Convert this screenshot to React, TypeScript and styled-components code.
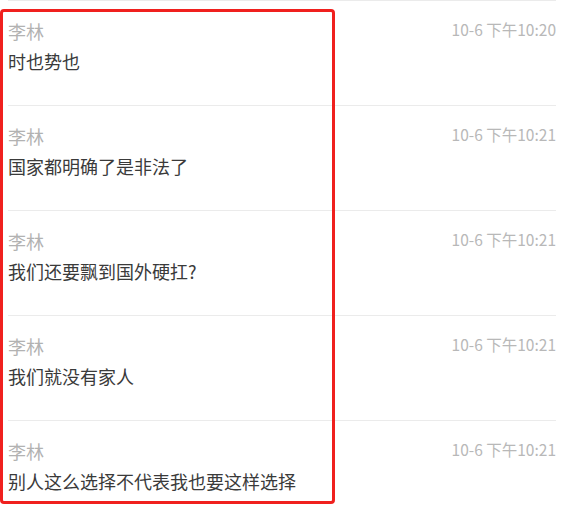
import styled, { createGlobalStyle } from 'styled-components';

interface Message {
    name: string;
    text: string;
    time: string;
}

const messages: Message[] = [
    { name: '李林', text: '时也势也', time: '10-6 下午10:20' },
    { name: '李林', text: '国家都明确了是非法了', time: '10-6 下午10:21' },
    { name: '李林', text: '我们还要飘到国外硬扛?', time: '10-6 下午10:21' },
    { name: '李林', text: '我们就没有家人', time: '10-6 下午10:21' },
    { name: '李林', text: '别人这么选择不代表我也要这样选择', time: '10-6 下午10:21' },
];

export default function App() {
    return (
        <>
            <GlobalStyle />
            <Page>
                <List>
                    {messages.map((m, i) => (
                        <Row key={i}>
                            <Body>
                                <Name>{m.name}</Name>
                                <Text>{m.text}</Text>
                            </Body>
                            <Time>{m.time}</Time>
                        </Row>
                    ))}
                </List>
                <Highlight />
            </Page>
        </>
    );
}

const GlobalStyle = createGlobalStyle`
    html, body {
        margin: 0;
        padding: 0;
        background: #ffffff;
    }
    body {
        font-family: "Noto Sans CJK SC", "Noto Sans", sans-serif;
    }
`;

const Page = styled.div`
    position: relative;
    width: 564px;
    height: 508px;
    overflow: hidden;
    background: #ffffff;
`;

const List = styled.div`
    display: flex;
    flex-direction: column;
    margin-left: 8px;
    width: 548px;
`;

const Row = styled.div`
    display: flex;
    justify-content: space-between;
    align-items: flex-start;
    box-sizing: border-box;
    height: 105px;
    padding-top: 18px;
    border-top: 1px solid #ebebeb;
`;

const Body = styled.div`
    display: flex;
    flex-direction: column;
    gap: 6px;
`;

const Name = styled.div`
    font-size: 18px;
    line-height: 24px;
    color: #b2b2b2;
`;

const Text = styled.div`
    font-size: 18px;
    line-height: 24px;
    color: #3a3a3a;
`;

const Time = styled.div`
    margin-top: -2px;
    font-size: 15.5px;
    line-height: 24px;
    color: #b8b8b8;
    white-space: nowrap;
`;

const Highlight = styled.div`
    position: absolute;
    left: 0;
    top: 9px;
    width: 335px;
    height: 495px;
    box-sizing: border-box;
    border: 3px solid #f0201e;
    border-radius: 4px;
    pointer-events: none;
`;
